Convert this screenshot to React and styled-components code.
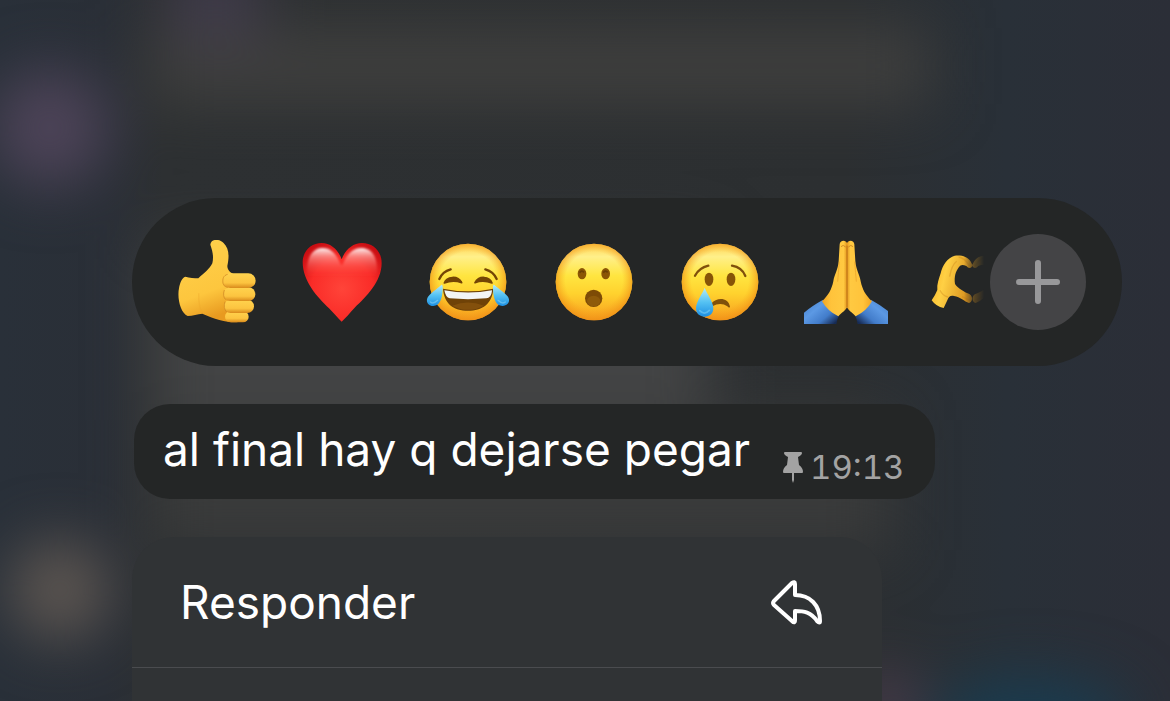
import React, { useId } from "react";
import styled, { createGlobalStyle } from "styled-components";

const GlobalStyle = createGlobalStyle`
  * {
    box-sizing: border-box;
  }
  html, body, #root {
    height: 100%;
  }
  body {
    margin: 0;
    background: #2a2f36;
    font-family: Inter, "Liberation Sans", sans-serif;
    overflow: hidden;
  }
  button {
    border: 0;
    padding: 0;
    background: none;
    font: inherit;
    color: inherit;
    cursor: pointer;
  }
`;

const Screen = styled.main`
  position: relative;
  display: flex;
  flex-direction: column;
  align-items: flex-start;
  min-height: 100vh;
  padding: 198px 48px 0 132px;
  overflow: hidden;
`;

const Backdrop = styled.svg`
  position: absolute;
  inset: 0;
  width: 100%;
  height: 100%;
  z-index: -1;
`;

const ReactionBar = styled.div`
  display: flex;
  align-items: center;
  gap: 6px;
  align-self: stretch;
  height: 168px;
  padding: 0 36px 0 42px;
  border-radius: 84px;
  background: #242626;
`;

const Reactions = styled.div`
  display: flex;
  flex: 1;
  gap: 42px;
  min-width: 0;
  overflow: hidden;
  mask-image: linear-gradient(to left, transparent 0, rgba(0, 0, 0, 0.3) 10px, #000 20px);
`;

const Reaction = styled.button`
  flex: none;
  width: 84px;
  height: 84px;
`;

const Glyph = styled.svg`
  display: block;
  width: 100%;
  height: 100%;
`;

const AddButton = styled.button`
  display: grid;
  flex: none;
  place-items: center;
  width: 96px;
  height: 96px;
  border-radius: 50%;
  background: #444446;
  color: #98989a;
`;

const Bubble = styled.article`
  display: flex;
  align-items: flex-end;
  gap: 32px;
  margin: 38px 0 0 2px;
  padding: 15px 30px 16px 29px;
  border-radius: 36px;
  background: #242626;
`;

const Message = styled.p`
  margin: 0;
  padding-bottom: 4px;
  color: #fff;
  font-size: 46px;
  line-height: 60px;
  white-space: nowrap;
`;

const Meta = styled.div`
  display: flex;
  align-items: center;
  gap: 6px;
  color: #a3a3a3;
  font-size: 33px;
  font-variant-numeric: tabular-nums;
  line-height: 32px;
`;

const Menu = styled.div`
  display: flex;
  flex: 1;
  flex-direction: column;
  width: 750px;
  max-width: 100%;
  margin-top: 38px;
  border-radius: 42px 42px 0 0;
  background: #303335;
`;

const MenuItem = styled.button`
  display: flex;
  align-items: center;
  justify-content: space-between;
  height: 131px;
  padding: 0 58px 0 48px;
  border-bottom: 1px solid #4a4c4f;
  color: #fff;
  font-size: 46px;
`;

const Face = ({ id }) => (
  <>
    <defs>
      <linearGradient id={`${id}f`} x1="0" y1="0" x2="0" y2="1">
        <stop offset="0" stopColor="#ffd14f" />
        <stop offset="0.17" stopColor="#fff08a" />
        <stop offset="0.42" stopColor="#ffe540" />
        <stop offset="0.65" stopColor="#ffd22e" />
        <stop offset="1" stopColor="#f79d1e" />
      </linearGradient>
      <radialGradient id={`${id}e`} cx="0.5" cy="0.48" r="0.53">
        <stop offset="0.7" stopColor="#f8a51d" stopOpacity="0" />
        <stop offset="1" stopColor="#ee8e16" stopOpacity="0.85" />
      </radialGradient>
      <linearGradient id={`${id}t`} x1="0" y1="0" x2="0" y2="1">
        <stop offset="0" stopColor="#b4ecfa" />
        <stop offset="0.5" stopColor="#55c2f3" />
        <stop offset="1" stopColor="#1d8fe2" />
      </linearGradient>
    </defs>
    <circle cx="126" cy="126" r="115" fill={`url(#${id}f)`} />
    <circle cx="126" cy="126" r="115" fill={`url(#${id}e)`} />
  </>
);

const ThumbsUp = ({ id }) => (
  <Glyph viewBox="42 45 252 252" aria-hidden="true">
    <defs>
      <linearGradient id={`${id}a`} x1="0" y1="0" x2="0.3" y2="1">
        <stop offset="0" stopColor="#ffd24d" />
        <stop offset="0.7" stopColor="#fdc63e" />
        <stop offset="1" stopColor="#e89a20" />
      </linearGradient>
      <linearGradient id={`${id}b`} x1="0" y1="0" x2="0" y2="1">
        <stop offset="0" stopColor="#ffd34e" />
        <stop offset="0.65" stopColor="#fcc440" />
        <stop offset="1" stopColor="#d98a1b" />
      </linearGradient>
    </defs>
    <path
      d="M151 59C152 42 176 40 190 53C206 68 209 89 202 123C202 136 213 145 225 149L258 270Q258 290 230 292C200 293 162 282 127 266C113 267 98 272 83 273C61 264 51 218 57 190C59 175 66 158 76 155C89 158 103 160 115 160C132 144 149 132 157 115C161 96 159 82 151 59Z"
      fill={`url(#${id}a)`}
    />
    <path d="M127 266C119 254 116 226 116 205" stroke="#eda52b" strokeWidth="4" fill="none" opacity=".35" />
    <rect x="195" y="258" width="71" height="34" rx="17" fill={`url(#${id}b)`} />
    <rect x="192" y="224" width="90" height="40" rx="20" fill={`url(#${id}b)`} />
    <rect x="190" y="187" width="96" height="41" rx="20" fill={`url(#${id}b)`} />
    <rect x="188" y="145" width="99" height="44" rx="22" fill={`url(#${id}b)`} />
    <path
      d="M203 148C190 151 187 162 189 175Q191 185 203 188M193 195Q187 214 197 224M195 230Q189 250 200 261"
      stroke="#cf8521"
      strokeWidth="3"
      fill="none"
      opacity=".75"
    />
  </Glyph>
);

const Heart = ({ id }) => (
  <Glyph viewBox="45 45 252 252" aria-hidden="true">
    <defs>
      <radialGradient id={`${id}a`} cx="0.5" cy="0.58" r="0.65">
        <stop offset="0" stopColor="#ff4439" />
        <stop offset="0.6" stopColor="#fa2c28" />
        <stop offset="1" stopColor="#c80d12" />
      </radialGradient>
      <linearGradient id={`${id}b`} x1="0" y1="0" x2="0" y2="1">
        <stop offset="0" stopColor="#fff" stopOpacity="0.95" />
        <stop offset="0.3" stopColor="#ffa59f" stopOpacity="0.7" />
        <stop offset="1" stopColor="#ff4439" stopOpacity="0" />
      </linearGradient>
      <filter id={`${id}s`}>
        <feGaussianBlur stdDeviation="3" />
      </filter>
    </defs>
    <path
      d="M170 290C159 280 145 263 132 250C99 219 53 169 53 112C53 78 78 54 110 54C138 54 160 75 170 103C180 75 203 54 231 54C265 54 290 79 290 114C290 170 243 216 209 248C195 263 181 280 170 290Z"
      fill={`url(#${id}a)`}
    />
    <path
      d="M67 155C62 99 82 70 111 69C139 68 157 91 166 117Q170 124 174 117C183 90 204 68 231 69C263 71 281 99 275 155Z"
      fill={`url(#${id}b)`}
      filter={`url(#${id}s)`}
    />
  </Glyph>
);

const Joy = ({ id }) => (
  <Glyph viewBox="0 0 252 252" aria-hidden="true">
    <Face id={id} />
    <path
      d="M40 117Q49 95 74 88M178 88Q203 95 212 117"
      fill="none"
      stroke="#744505"
      strokeWidth="7"
      strokeLinecap="round"
    />
    <path
      d="M55 129C62 108 96 106 107 128Q81 119 55 129ZM147 128C158 106 191 108 198 129Q172 119 147 128Z"
      fill="#744505"
      stroke="#744505"
      strokeWidth="5"
      strokeLinejoin="round"
    />
    <path d="M51 146Q126 162 202 146C199 191 169 212 126 212S54 191 51 146Z" fill="#6f4207" />
    <path d="M55 151Q126 164 198 151C197 167 190 175 181 175Q126 180 71 175Q59 173 55 151Z" fill="#f3f5f5" />
    <path d="M79 197Q126 178 174 197Q126 222 79 197Z" fill="#a86a17" opacity=".35" />
    <path d="M46 135C49 132 51 139 50 148C49 178 40 199 21 198C4 197-3 181 8 168C17 157 29 150 46 135Z" fill={`url(#${id}t)`} />
    <path d="M205 135C202 132 200 139 201 148C202 178 211 199 230 198C248 197 255 181 244 168C235 157 222 150 205 135Z" fill={`url(#${id}t)`} />
    <path d="M13 186Q22 194 35 181M238 186Q229 194 216 181" stroke="#a9e6fb" strokeWidth="4" fill="none" strokeLinecap="round" opacity=".4" />
  </Glyph>
);

const Surprised = ({ id }) => (
  <Glyph viewBox="0 0 252 252" aria-hidden="true">
    <Face id={id} />
    <ellipse cx="90" cy="101" rx="13" ry="17" fill="#8b5505" />
    <ellipse cx="161" cy="101" rx="13" ry="17" fill="#8b5505" />
    <circle cx="125" cy="175" r="26" fill="#7d4b06" />
    <ellipse cx="125" cy="183" rx="20" ry="16" fill="#a46d10" opacity=".45" />
    <path d="M83 98Q89 89 96 97M154 98Q160 89 167 97" stroke="#6a3e04" strokeWidth="5" fill="none" />
  </Glyph>
);

const Crying = ({ id }) => (
  <Glyph viewBox="0 0 252 252" aria-hidden="true">
    <Face id={id} />
    <path d="M51 107Q63 84 91 77M162 77Q192 82 202 108" stroke="#80500b" strokeWidth="7" strokeLinecap="round" fill="none" />
    <ellipse cx="93" cy="118" rx="13" ry="20" fill="#875407" />
    <ellipse cx="159" cy="118" rx="13" ry="20" fill="#875407" />
    <path d="M101 190C113 174 150 169 156 200Q154 206 148 199Q128 185 103 199Z" fill="#80500b" />
    <path d="M80 143C86 160 106 185 106 205C106 221 95 230 80 230S54 221 54 205C54 185 74 160 80 143Z" fill={`url(#${id}t)`} />
    <path d="M65 212Q79 227 94 211" stroke="#8fdcfa" strokeWidth="5" fill="none" strokeLinecap="round" opacity=".45" />
  </Glyph>
);

const Pray = ({ id }) => (
  <Glyph viewBox="57 45 252 252" aria-hidden="true">
    <defs>
      <linearGradient id={`${id}a`}>
        <stop offset="0" stopColor="#f0a422" />
        <stop offset="0.35" stopColor="#ffc33b" />
        <stop offset="0.85" stopColor="#ffc941" />
        <stop offset="1" stopColor="#e2941c" />
      </linearGradient>
      <linearGradient id={`${id}b`} x1="0" y1="0" x2="1" y2="0.8">
        <stop offset="0" stopColor="#427dc9" />
        <stop offset="0.4" stopColor="#5c99e4" />
        <stop offset="0.72" stopColor="#427cca" />
        <stop offset="1" stopColor="#172b54" />
      </linearGradient>
      <g id={`${id}h`}>
        <path d="M57 263Q79 244 113 225Q130 254 163 269Q156 282 154 297H57Z" fill={`url(#${id}b)`} />
        <path
          d="M164 58C165 48 176 44 184 51Q187 54 187 60V244C184 257 169 263 160 274Q128 259 111 229C131 210 140 193 145 169C148 148 159 135 161 108Z"
          fill={`url(#${id}a)`}
        />
        <path d="M168 65Q174 57 182 66M185 62V246" stroke="#bd741a" strokeWidth="3" fill="none" opacity=".7" />
        <path d="M163 110Q160 145 158 170" stroke="#e69b25" strokeWidth="3" fill="none" opacity=".6" />
      </g>
    </defs>
    <use href={`#${id}h`} />
    <use href={`#${id}h`} transform="translate(372) scale(-1 1)" />
  </Glyph>
);

const HeartHands = ({ id }) => (
  <Glyph viewBox="60 45 252 252" aria-hidden="true">
    <defs>
      <linearGradient id={`${id}a`} x1="0" y1="0" x2="1" y2="0.3">
        <stop offset="0" stopColor="#f6ae20" />
        <stop offset="0.4" stopColor="#ffd044" />
        <stop offset="1" stopColor="#d9931f" />
      </linearGradient>
      <g id={`${id}h`}>
        <path
          d="M65 226Q76 210 82 195C80 178 87 161 92 145C97 121 113 98 134 92C154 89 173 95 181 108L188 121C185 130 176 132 169 123C158 118 152 119 147 126C137 139 132 155 135 177C144 191 165 202 178 207C190 213 188 232 177 234C163 230 151 215 132 213C121 210 115 216 112 226L101 249Q78 245 65 226Z"
          fill={`url(#${id}a)`}
        />
        <path
          d="M146 96Q165 99 178 123M140 109Q125 120 119 155M90 196Q98 213 114 216M157 215Q170 224 181 226"
          stroke="#c57d18"
          strokeWidth="4"
          fill="none"
          opacity=".35"
        />
      </g>
    </defs>
    <use href={`#${id}h`} />
    <use href={`#${id}h`} transform="translate(374) scale(-1 1)" />
  </Glyph>
);

const reactions = [
  { name: "Me gusta", Icon: ThumbsUp },
  { name: "Corazón", Icon: Heart },
  { name: "Risa", Icon: Joy },
  { name: "Sorpresa", Icon: Surprised },
  { name: "Tristeza", Icon: Crying },
  { name: "Gracias", Icon: Pray },
  { name: "Manos en corazón", Icon: HeartHands }
];

const ReactionButton = ({ name, Icon }) => {
  const id = useId();
  return (
    <Reaction type="button" aria-label={name}>
      <Icon id={id} />
    </Reaction>
  );
};

const Wallpaper = () => (
  <Backdrop viewBox="0 0 1170 701" preserveAspectRatio="none" aria-hidden="true">
    <defs>
      <filter
        id="soft"
        filterUnits="userSpaceOnUse"
        x="-150"
        y="-150"
        width="1470"
        height="1000"
        colorInterpolationFilters="sRGB"
      >
        <feGaussianBlur stdDeviation="30" />
      </filter>
      <linearGradient id="base">
        <stop offset="0" stopColor="#293039" />
        <stop offset="0.09" stopColor="#2a2f37" />
        <stop offset="0.14" stopColor="#2d3032" />
        <stop offset="0.72" stopColor="#2c2f31" />
        <stop offset="0.86" stopColor="#293038" />
        <stop offset="1" stopColor="#2b2e37" />
      </linearGradient>
    </defs>
    <rect width="1170" height="701" fill="url(#base)" />
    <g filter="url(#soft)">
      <rect x="150" y="28" width="780" height="76" fill="#3f3f3e" />
      <rect x="170" y="-40" width="90" height="80" fill="#403b4b" />
      <circle cx="50" cy="128" r="58" fill="#4e4459" />
      <rect x="150" y="240" width="560" height="180" fill="#434445" />
      <rect x="150" y="420" width="740" height="130" fill="#3a3b3b" />
      <circle cx="60" cy="590" r="50" fill="#5e5752" />
      <ellipse cx="1030" cy="722" rx="100" ry="44" fill="#193c50" />
      <circle cx="885" cy="706" r="30" fill="#544054" />
    </g>
  </Backdrop>
);

const PlusIcon = () => (
  <svg width="48" height="48" viewBox="0 0 48 48" aria-hidden="true">
    <path d="M24 5V43M5 24H43" stroke="currentColor" strokeWidth="6" strokeLinecap="round" />
  </svg>
);

const PinIcon = () => (
  <svg width="22" height="32" viewBox="0 0 22 32" fill="currentColor" aria-hidden="true">
    <path d="M2 2Q2 1 3 1H19Q20 1 20 2Q20 4 16 6L17 14Q21 17 21 21Q21 22 20 22H12V29L11 32L10 29V22H2Q1 22 1 21Q1 17 5 14L6 6Q2 4 2 2Z" />
  </svg>
);

const ReplyIcon = () => (
  <svg width="54" height="46" viewBox="0 0 54 46" fill="none" aria-hidden="true">
    <path
      d="M22 4Q25 2 25 5V16C40 16 50 26 50 42Q50 45 47 42C41 33 34 32 25 32V41Q25 45 22 42L4 26Q2 24 4 22Z"
      stroke="currentColor"
      strokeWidth="4"
      strokeLinejoin="round"
    />
  </svg>
);

export default function App() {
  return (
    <>
      <GlobalStyle />
      <Screen>
        <Wallpaper />
        <ReactionBar>
          <Reactions>
            {reactions.map(r => (
              <ReactionButton key={r.name} {...r} />
            ))}
          </Reactions>
          <AddButton type="button" aria-label="Más reacciones">
            <PlusIcon />
          </AddButton>
        </ReactionBar>
        <Bubble>
          <Message>al final hay q dejarse pegar</Message>
          <Meta>
            <PinIcon />
            <time>19:13</time>
          </Meta>
        </Bubble>
        <Menu>
          <MenuItem type="button">
            Responder
            <ReplyIcon />
          </MenuItem>
        </Menu>
      </Screen>
    </>
  );
}
